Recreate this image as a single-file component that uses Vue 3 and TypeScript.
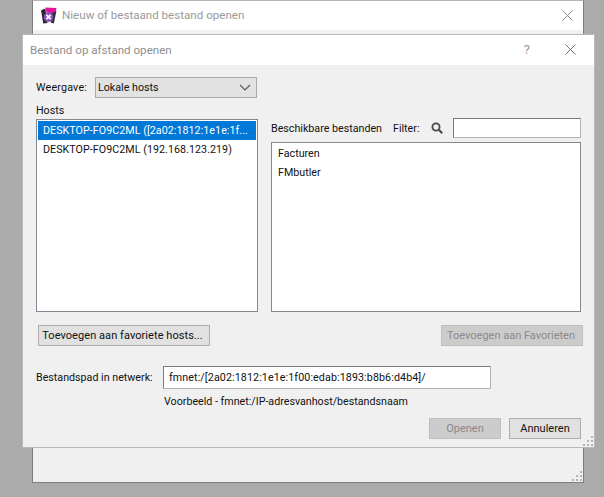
<script setup lang="ts">
const hosts: string[] = ['DESKTOP-FO9C2ML ([2a02:1812:1e1e:1f...', 'DESKTOP-FO9C2ML (192.168.123.219)']
const files: string[] = ['Facturen', 'FMbutler']
</script>

<template>
  <div class="desktop">
    <div class="window back">
      <div class="titlebar back-title">
        <svg class="logo" width="17" height="17" viewBox="0 0 16 16">
          <path d="M5 0.5 L15.5 1 L14 7 L6 5 Z" fill="#e3129a" />
          <path d="M1 3 L5 1.5 L7 15 L3 15.5 Z" fill="#26262f" />
          <path d="M11 6 L15.5 3.5 L13 15.5 L10 14.5 Z" fill="#2e2e38" />
          <circle cx="8" cy="9.5" r="4.6" fill="#8a4fc0" />
          <path d="M6 7.5 L10 11.5 M10 7.5 L6 11.5" stroke="#fff" stroke-width="1.7" />
        </svg>
        <span class="title-text back-text">Nieuw of bestaand bestand openen</span>
        <svg class="close" width="11" height="11" viewBox="0 0 11 11"><path d="M.5.5l10 10M10.5.5l-10 10" stroke="#8a8a8a" fill="none" /></svg>
      </div>
      <svg class="grip" width="10" height="10" viewBox="0 0 10 10"><path d="M8 0h2v2H8zM4 4h2v2H4zM8 4h2v2H8zM0 8h2v2H0zM4 8h2v2H4zM8 8h2v2H8z" fill="#b4b4b4" /></svg>
    </div>

    <div class="window dialog">
      <div class="titlebar dlg-title">
        <span class="title-text">Bestand op afstand openen</span>
        <span class="help">?</span>
        <svg class="close" width="11" height="11" viewBox="0 0 11 11"><path d="M.5.5l10 10M10.5.5l-10 10" stroke="#6e6e6e" fill="none" /></svg>
      </div>

      <div class="body">
        <div class="view-row">
          <span class="view-label">Weergave:</span>
          <div class="select">
            <span>Lokale hosts</span>
            <svg width="12" height="7" viewBox="0 0 12 7"><path d="M1 1l5 5 5-5" stroke="#555" stroke-width="1.1" fill="none" /></svg>
          </div>
        </div>

        <div class="columns">
          <div class="col-left">
            <div class="hosts-label">Hosts</div>
            <ul class="list hosts">
              <li v-for="(h, i) in hosts" :key="h" :class="{ selected: i === 0 }">{{ h }}</li>
            </ul>
          </div>
          <div class="col-right">
            <div class="filter-row">
              <span class="avail">Beschikbare bestanden</span>
              <span class="filter">Filter:</span>
              <svg class="mag" width="12" height="12" viewBox="0 0 12 12"><circle cx="5" cy="5" r="3.6" stroke="#4a4a4a" stroke-width="1.8" fill="none" /><path d="M7.8 7.8l3.4 3.4" stroke="#4a4a4a" stroke-width="2.2" /></svg>
              <div class="input filter-input"></div>
            </div>
            <ul class="list files">
              <li v-for="f in files" :key="f">{{ f }}</li>
            </ul>
          </div>
        </div>

        <div class="fav-row">
          <div class="btn add-host">Toevoegen aan favoriete hosts...</div>
          <div class="btn disabled add-fav">Toevoegen aan Favorieten</div>
        </div>

        <div class="path-row">
          <span class="path-label">Bestandspad in netwerk:</span>
          <div class="input path-input">fmnet:/[2a02:1812:1e1e:1f00:edab:1893:b8b6:d4b4]/</div>
        </div>
        <div class="example">Voorbeeld - fmnet:/IP-adresvanhost/bestandsnaam</div>

        <div class="actions">
          <div class="btn disabled action">Openen</div>
          <div class="btn action">Annuleren</div>
        </div>
      </div>
      <svg class="grip" width="10" height="10" viewBox="0 0 10 10"><path d="M8 0h2v2H8zM4 4h2v2H4zM8 4h2v2H8zM0 8h2v2H0zM4 8h2v2H4zM8 8h2v2H8z" fill="#b4b4b4" /></svg>
    </div>
  </div>
</template>

<style scoped>
.desktop {
  position: relative;
  width: 604px;
  height: 497px;
  overflow: hidden;
  background: #ababab;
  font-family: Roboto, "Noto Sans", sans-serif;
  font-size: 10.7px;
  color: #111;
}
.window {
  position: absolute;
  box-sizing: border-box;
  background: #f0f0f0;
}
.back {
  left: 32px;
  top: 0;
  width: 552px;
  height: 483px;
  border: 1px solid #7d7d7d;
  border-top: 1px solid #b5b5b5;
}
.dialog {
  left: 22px;
  top: 34px;
  width: 573px;
  height: 414px;
  border: 1px solid #b9b9b9;
  display: flex;
  flex-direction: column;
}
.titlebar {
  display: flex;
  align-items: center;
  background: #fff;
  flex: none;
}
.back-title {
  box-sizing: border-box;
  height: 29px;
  padding: 0 10px 1px 7px;
  gap: 5px;
}
.dlg-title {
  box-sizing: border-box;
  height: 30px;
  padding: 0 18px 1px 7px;
}
.title-text {
  flex: 1;
  font-size: 11.6px;
  color: #8f8f8f;
}
.back-text {
  color: #9a9a9a;
}
.help {
  font-size: 13px;
  color: #9a9a9a;
  margin-right: 35px;
}
.body {
  display: flex;
  flex-direction: column;
  padding: 12px 13px 0 13px;
  flex: 1;
}
.view-row {
  display: flex;
  align-items: center;
  height: 21px;
}
.view-label {
  width: 59px;
  letter-spacing: 0.2px;
}
.select {
  box-sizing: border-box;
  width: 162px;
  height: 21px;
  display: flex;
  align-items: center;
  justify-content: space-between;
  padding: 0 3px 0 2px;
  background: #e2e2e2;
  border: 1px solid #a8a8a8;
}
.select svg {
  margin-right: 2px;
}
.columns {
  display: flex;
  gap: 13px;
  margin-top: 5px;
}
.col-left {
  width: 222px;
  flex: none;
  display: flex;
  flex-direction: column;
}
.hosts-label {
  height: 16px;
  line-height: 16px;
}
.list {
  list-style: none;
  margin: 0;
  padding: 1px;
  box-sizing: border-box;
  background: #fff;
  border: 1px solid #828790;
}
.hosts {
  height: 193px;
}
.hosts li {
  height: 19px;
  line-height: 19px;
  padding-left: 5px;
  white-space: nowrap;
  overflow: hidden;
  letter-spacing: 0.05px;
}
.hosts li.selected {
  background: #0078d7;
  color: #fff;
}
.col-right {
  flex: 1;
  min-width: 0;
  display: flex;
  flex-direction: column;
}
.filter-row {
  display: flex;
  align-items: center;
  height: 20px;
  margin-top: 15px;
  margin-bottom: 4px;
}
.avail {
  width: 122px;
}
.filter {
  width: 34px;
}
.mag {
  margin-left: 4px;
  margin-right: 10px;
}
.input {
  box-sizing: border-box;
  background: #fff;
  border: 1px solid #7a7a7a;
  border-right-color: #b4b4b4;
  border-bottom-color: #b4b4b4;
}
.filter-input {
  width: 128px;
  height: 20px;
}
.files {
  height: 170px;
  padding: 1px 6px;
}
.files li {
  height: 19px;
  line-height: 19px;
}
.fav-row {
  display: flex;
  justify-content: space-between;
  margin: 13px -2px 0 2px;
}
.btn {
  box-sizing: border-box;
  height: 21px;
  display: flex;
  align-items: center;
  justify-content: center;
  white-space: nowrap;
  font-size: 11px;
  background: #e1e1e1;
  border: 1px solid #adadad;
}
.btn.disabled {
  background: #cccccc;
  border-color: #bfbfbf;
  color: #8a8a8a;
}
.add-host {
  width: 172px;
  letter-spacing: 0.06px;
  padding-right: 3px;
}
.add-fav {
  width: 142px;
  padding-right: 2px;
}
.path-row {
  display: flex;
  align-items: center;
  margin-top: 20px;
  height: 23px;
}
.path-label {
  width: 127px;
  flex: none;
  white-space: nowrap;
}
.path-input {
  width: 328px;
  height: 23px;
  line-height: 21px;
  padding-left: 5px;
  letter-spacing: 0.1px;
}
.example {
  margin: 5px 0 0 128px;
  height: 16px;
  line-height: 16px;
}
.actions {
  display: flex;
  justify-content: flex-end;
  gap: 8px;
  margin-top: 8px;
}
.action {
  width: 72px;
}
.grip {
  position: absolute;
  right: 1px;
  bottom: 1px;
}
</style>
